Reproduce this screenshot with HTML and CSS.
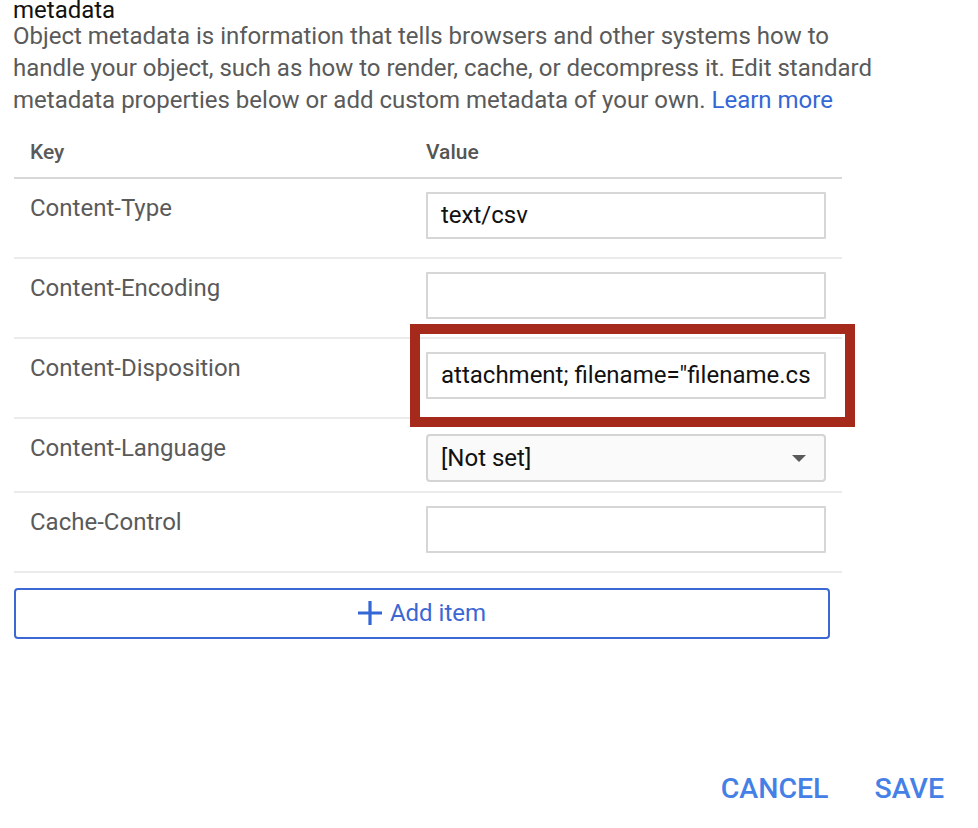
FILE: index.html
```html
<!DOCTYPE html>
<html>
<head>
<meta charset="utf-8">
<link rel="stylesheet" href="styles.css">
</head>
<body>
<div class="page">
  <div class="title">metadata</div>
  <p class="desc">Object metadata is information that tells browsers and other systems how to handle your object, such as how to render, cache, or decompress it. Edit standard metadata properties below or add custom metadata of your own. <a class="link" href="#">Learn more</a></p>

  <div class="table">
    <div class="row head">
      <div class="key">Key</div>
      <div class="val">Value</div>
    </div>
    <div class="row">
      <div class="key">Content-Type</div>
      <div class="val"><div class="input">text/csv</div></div>
    </div>
    <div class="row">
      <div class="key">Content-Encoding</div>
      <div class="val"><div class="input"></div></div>
    </div>
    <div class="row">
      <div class="key">Content-Disposition</div>
      <div class="val hl-wrap">
        <div class="input">attachment; filename="filename.cs</div>
        <div class="highlight"></div>
      </div>
    </div>
    <div class="row sel-row">
      <div class="key">Content-Language</div>
      <div class="val">
        <div class="select"><span>[Not set]</span><svg class="caret" width="14" height="8" viewBox="0 0 14 8"><path d="M0 0h14L7 7z" fill="#5a5a5a"/></svg></div>
      </div>
    </div>
    <div class="row">
      <div class="key">Cache-Control</div>
      <div class="val"><div class="input"></div></div>
    </div>
  </div>

  <button class="add">
    <svg width="24" height="24" viewBox="0 0 24 24"><path d="M10.4 0h3.2v10.4H24v3.2H13.6V24h-3.2V13.6H0v-3.2h10.4z" fill="#3367d6"/></svg>
    <span>Add item</span>
  </button>

  <div class="footer">
    <span class="btn">CANCEL</span>
    <span class="btn">SAVE</span>
  </div>
</div>
</body>
</html>
```

FILE: styles.css
```css
html, body {
  margin: 0;
  padding: 0;
  background: #ffffff;
}
body {
  font-family: Roboto, "Liberation Sans", Arial, sans-serif;
  color: #5a5a5a;
}
.page {
  width: 828px;
  padding-left: 14px;
}
.title {
  font-size: 24px;
  line-height: 20px;
  color: #111;
  margin-left: -1px;
}
.desc {
  margin: 0;
  width: 880px;
  font-size: 24px;
  line-height: 32px;
  color: #5a5a5a;
  margin-left: -1px;
}
.link {
  color: #3367d6;
  text-decoration: none;
}
.row {
  display: grid;
  grid-template-columns: 396px 400px;
  padding-left: 16px;
  border-bottom: 2px solid #ebebeb;
  height: 78px;
  box-sizing: content-box;
}
.row.head {
  height: 61px;
  border-bottom-color: #d8d8d8;
  font-weight: 500;
  font-size: 21px;
  color: #555;
}
.row.head .key, .row.head .val {
  padding-top: 24px;
  line-height: 24px;
  font-size: 21px;
}
.key {
  font-size: 24px;
  line-height: 28px;
  padding-top: 15px;
  color: #5a5a5a;
}
.val {
  padding-top: 13px;
}
.row.sel-row {
  height: 72px;
}
.row.sel-row .val {
  padding-top: 15px;
}
.input {
  box-sizing: border-box;
  height: 47px;
  border: 2px solid #d6d6d6;
  border-radius: 1px;
  padding: 0 13px;
  font-size: 24px;
  line-height: 43px;
  color: #111;
  white-space: nowrap;
  overflow: hidden;
}
.select {
  box-sizing: border-box;
  height: 48px;
  border: 2px solid #d4d4d4;
  border-radius: 4px;
  background: #fafafa;
  padding: 0 18px 0 13px;
  font-size: 24px;
  color: #111;
  display: flex;
  align-items: center;
  justify-content: space-between;
}
.caret {
  margin-top: 2px;
}
.hl-wrap {
  position: relative;
}
.highlight {
  position: absolute;
  left: -16px;
  top: -15px;
  width: 445px;
  height: 103px;
  box-sizing: border-box;
  border: 10px solid #a52a1b;
  pointer-events: none;
}
.add {
  margin-top: 15px;
  width: 816px;
  height: 51px;
  box-sizing: border-box;
  border: 2px solid #3b68d3;
  border-radius: 4px;
  background: #fff;
  display: flex;
  align-items: center;
  justify-content: center;
  gap: 8px;
  font-family: Roboto, "Liberation Sans", Arial, sans-serif;
  font-size: 24px;
  color: #3b68d3;
  padding: 0 0 1px 0;
}
.footer {
  display: flex;
  justify-content: flex-end;
  gap: 46px;
  width: 930px;
  margin-top: 135px;
}
.btn {
  font-size: 28.5px;
  font-weight: 500;
  color: #4580e6;
  line-height: 30px;
}
```
